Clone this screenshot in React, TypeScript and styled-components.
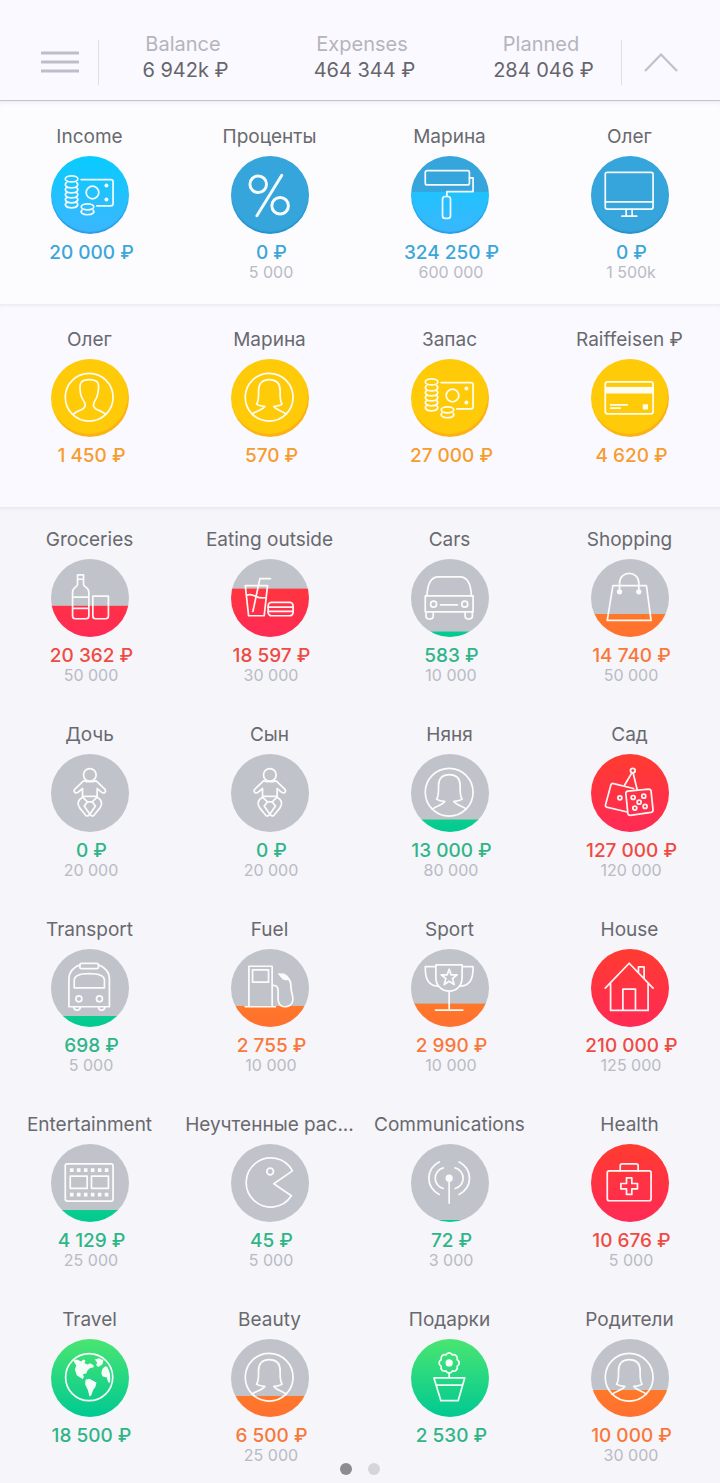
import React from 'react';
import styled, { createGlobalStyle } from 'styled-components';

const GlobalStyle = createGlobalStyle`
  *, *::before, *::after { box-sizing: border-box; }
  body {
    margin: 0;
    background: #f5f5fa;
    font-family: Inter, "Noto Sans", "Liberation Sans", sans-serif;
  }
  button {
    margin: 0;
    padding: 0;
    border: 0;
    background: none;
    font: inherit;
    color: inherit;
    cursor: pointer;
  }
`;

type Tone = 'income' | 'account' | 'green' | 'orange' | 'red';

const tones: Record<Tone, { base: string; fill: string; text: string; edge: string }> = {
  income: {
    base: '#35a5db',
    fill: 'linear-gradient(#08ccff, #3cb6fd)',
    text: '#3ba6d8',
    edge: 'inset 0 -2px 1px rgba(20, 120, 190, 0.4)',
  },
  account: {
    base: '#ffcb08',
    fill: 'linear-gradient(#ffcb08, #ffcb08)',
    text: '#f79c2d',
    edge: 'inset -1px -3px 1px #fcb116',
  },
  green: {
    base: '#c0c3c9',
    fill: 'linear-gradient(#4ae571, #00c993)',
    text: '#2fb587',
    edge: 'none',
  },
  orange: {
    base: '#c0c3c9',
    fill: 'linear-gradient(#ff8a1a, #ff7030)',
    text: '#f9783a',
    edge: 'none',
  },
  red: {
    base: '#c0c3c9',
    fill: 'linear-gradient(#ff3b30, #ff2a55)',
    text: '#f04a42',
    edge: 'none',
  },
};

const Page = styled.div`
  display: flex;
  flex-direction: column;
  min-height: 100vh;
`;

const Header = styled.header`
  display: flex;
  align-items: flex-end;
  height: 101px;
  padding: 0 21px 15px;
  background: #faf9ff;
  border-bottom: 1px solid #c5c4ce;
`;

const HeaderButton = styled.button`
  display: flex;
  align-items: center;
  justify-content: center;
  width: 77px;
  height: 45px;
`;

const Totals = styled.div`
  flex: 1;
  display: flex;
  justify-content: space-between;
  height: 45px;
  padding: 0 20px 0 24px;
  border: solid #dfdee8;
  border-width: 0 1px;
`;

const Total = styled.div`
  display: flex;
  flex-direction: column;
  align-items: center;
  justify-content: flex-end;
  width: 120px;
  margin-top: -10px;
  padding-bottom: 2px;
  white-space: nowrap;
`;

const TotalLabel = styled.span`
  font-size: 20px;
  line-height: 26px;
  color: #b5b4bd;
`;

const TotalValue = styled.span`
  padding-left: 5px;
  font-size: 20px;
  line-height: 26px;
  color: #66656b;
`;

const Section = styled.section<{ $bg: string; $top: number; $bottom: number }>`
  display: grid;
  grid-template-columns: repeat(4, minmax(0, 1fr));
  row-gap: 39px;
  padding: ${(p) => p.$top}px 0 ${(p) => p.$bottom}px;
  background: ${(p) => p.$bg};
  box-shadow: inset 0 4px 4px -3px rgba(90, 90, 120, 0.12);
`;

const Cell = styled.button`
  display: flex;
  flex-direction: column;
  align-items: center;
  height: 156px;
  padding-right: 1px;
  white-space: nowrap;
`;

const Name = styled.span`
  max-width: 100%;
  font-size: 19px;
  line-height: 26px;
  color: #69696e;
`;

const Disc = styled.span<{ $tone: Tone; $level: number }>`
  display: block;
  width: 78px;
  height: 78px;
  margin: 6px 0 8px;
  border-radius: 50%;
  background:
    linear-gradient(${(p) => tones[p.$tone].base}, ${(p) => tones[p.$tone].base}) top / 100% ${(p) => 100 - p.$level}% no-repeat,
    ${(p) => tones[p.$tone].fill};
  box-shadow: ${(p) => tones[p.$tone].edge};
`;

const Glyph = styled.svg`
  display: block;
  width: 78px;
  height: 78px;
  fill: none;
  stroke: #fff;
  stroke-width: 5.2px;
  stroke-linecap: round;
  stroke-linejoin: round;
  opacity: 0.95;

  .solid {
    fill: #fff;
    stroke: none;
  }
`;

const Amount = styled.span<{ $tone: Tone }>`
  padding-left: 4px;
  font-size: 19px;
  font-weight: 500;
  line-height: 22px;
  color: ${(p) => tones[p.$tone].text};
`;

const Limit = styled.span`
  padding-left: 3px;
  font-size: 16px;
  line-height: 16px;
  color: #b9bbc3;
`;

const Pager = styled.nav`
  display: flex;
  justify-content: center;
  align-items: flex-start;
  gap: 16px;
  flex: 1;
  min-height: 20px;
  background: #f5f5fa;
`;

const Dot = styled.button<{ $on?: boolean }>`
  width: 12px;
  height: 12px;
  border-radius: 50%;
  background: ${(p) => (p.$on ? '#8d8c92' : '#d6d6d9')};
`;

const petals = (() => {
  const n = 8;
  const pts = Array.from({ length: n }, (_, i) => {
    const a = (Math.PI * 2 * (i + 0.5)) / n;
    return `${(115 + 26 * Math.cos(a)).toFixed(1)} ${(72 + 26 * Math.sin(a)).toFixed(1)}`;
  });
  return `M${pts[n - 1]} ` + pts.map((p) => `A11 11 0 0 1 ${p}`).join(' ') + 'Z';
})();

const coins = [80, 95, 110, 125, 140]
  .map((y) => `M47 ${y}c-8 6-3 16 15 16s23-10 15-16`)
  .join('');

const icons = {
  money: (
    <>
      <ellipse cx="62" cy="69" rx="19" ry="9" />
      <path d={coins} />
      <ellipse cx="110" cy="153" rx="19" ry="9" />
      <path d="M93 163c-6 8 2 14 17 14s23-6 17-14" />
      <path d="M91 71H180q7 0 7 7V143q0 7-7 7H138" />
      <circle cx="125" cy="110" r="19" />
      <circle className="solid" cx="167" cy="89" r="6" />
      <circle className="solid" cx="167" cy="131" r="6" />
    </>
  ),
  percent: (
    <g strokeWidth="9">
      <circle cx="82" cy="85" r="25" />
      <circle cx="148" cy="150" r="25" />
      <path d="M153 58L78 180" />
    </g>
  ),
  roller: (
    <>
      <rect x="43" y="44" width="133" height="43" rx="6" />
      <path d="M176 66H187V107H108V122" />
      <rect x="95" y="122" width="24" height="66" rx="8" />
    </>
  ),
  monitor: (
    <>
      <rect x="43" y="49" width="144" height="111" rx="6" />
      <path d="M43 138H187M106 161V181M124 161V181M93 181H138" />
    </>
  ),
  man: (
    <>
      <circle cx="115" cy="115" r="72" />
      <path d="M67 166C82 152 103 155 103 139C103 126 91 122 89 104C87 90 85 80 90 72C95 63 104 62 115 62C127 62 136 63 141 72C146 80 143 90 141 104C139 122 128 126 128 139C128 155 149 152 164 166" />
    </>
  ),
  woman: (
    <>
      <circle cx="115" cy="115" r="72" />
      <path d="M64 166C76 156 97 153 102 143C94 142 84 141 77 136C84 128 83 110 83 95C83 72 97 62 115 62C134 62 148 72 148 95C148 110 147 128 154 136C147 141 137 142 129 143C134 153 155 156 167 166" />
    </>
  ),
  card: (
    <>
      <rect x="43" y="69" width="144" height="96" rx="7" />
      <path d="M59 138H109M59 148H88" />
      <rect className="solid" x="43" y="84" width="144" height="20" />
      <rect className="solid" x="156" y="136" width="16" height="16" rx="2" />
    </>
  ),
  bottle: (
    <>
      <path d="M80 48H98V76C98 86 114 84 114 100V172q0 8-8 8H73q-8 0-8-8V100C65 84 80 86 80 76ZM80 61H98M65 115H114M65 149H114" />
      <path d="M126 112H173V172q0 8-8 8H134q-8 0-8-8Z" />
    </>
  ),
  drink: (
    <>
      <path d="M43 80H110L100 171H53ZM119 59H87L66 158M48 109Q58 104 74 112T106 116" />
      <rect x="112" y="131" width="75" height="40" rx="10" />
      <path d="M112 145H187M112 158H187" />
    </>
  ),
  car: (
    <>
      <path d="M48 111C50 70 65 54 82 54H148C165 54 180 70 182 111" />
      <rect x="43" y="111" width="144" height="48" />
      <path d="M45 159V172c0 12 22 12 22 0V159M163 159V172c0 12 22 12 22 0V159M89 138H140" />
      <circle cx="68" cy="136" r="9" />
      <circle cx="162" cy="136" r="9" />
    </>
  ),
  bag: (
    <>
      <path d="M66 80H167L181 185H49ZM86 98V72C86 34 144 34 144 72V98" />
      <circle className="solid" cx="86" cy="99" r="8" />
      <circle className="solid" cx="144" cy="99" r="8" />
    </>
  ),
  baby: (
    <>
      <circle cx="117" cy="63" r="19" />
      <path d="M98 81L72 106C66 113 74 121 82 115L95 104V128H139V104L152 115C160 121 168 113 162 106L136 81Q117 86 98 81" />
      <path d="M95 130C80 138 78 152 87 163L104 184C110 190 119 184 114 177L100 157L110 144H124L134 157L120 177C115 184 124 190 130 184L147 163C156 152 154 138 139 130M95 130L110 144M139 130L124 144" />
    </>
  ),
  dice: (
    <>
      <circle cx="126" cy="50" r="7" />
      <path d="M123 57L101 94M127 58L139 107" />
      <path d="M106 174L47 160q-5-2-3-8L60 93q2-5 8-4L128 104" />
      <path d="M111 112L174 106q6 0 7 6L187 169q0 6-6 7L118 185q-6 0-7-6L105 119q0-6 6-7Z" />
      <circle cx="87" cy="132" r="6" />
      <circle cx="127" cy="131" r="6" />
      <circle cx="159" cy="127" r="6" />
      <circle cx="145" cy="145" r="6" />
      <circle cx="132" cy="163" r="6" />
      <circle cx="163" cy="158" r="6" />
    </>
  ),
  bus: (
    <>
      <path d="M87 48C68 54 54 70 54 90V174H176V90C176 70 162 54 143 48" />
      <rect x="87" y="43" width="56" height="16" rx="5" />
      <path d="M70 117V94C70 80 90 74 115 74C141 74 161 80 161 94V117Z" />
      <circle cx="84" cy="150" r="9" />
      <circle cx="146" cy="150" r="9" />
      <path d="M69 175c0 13 19 13 19 0M143 175c0 13 19 13 19 0" />
    </>
  ),
  fuel: (
    <>
      <path d="M54 173V52H124V173M43 174H134" />
      <rect x="65" y="63" width="48" height="37" />
      <path d="M124 110C140 108 143 118 142 132C141 152 140 174 163 174C185 174 189 155 185 140C180 122 180 115 180 105C180 97 176 92 170 88" />
      <path className="solid" d="M140 73L160 74Q170 78 177 90L168 95L156 92Z" />
    </>
  ),
  trophy: (
    <>
      <path d="M75 48H154V85C154 113 135 127 115 127C95 127 75 113 75 85ZM75 53H43C42 95 55 112 83 112M154 53H187C188 95 175 112 147 112M115 127V184M74 184H156" />
      <path d="M115 61L121 78L139 78L125 89L130 107L115 97L100 107L105 89L91 78L109 78Z" />
    </>
  ),
  house: (
    <path d="M43 118L115 43L187 118M59 103V185H172V103M96 185V121H134V185M143 71V54H160V89" />
  ),
  film: (
    <>
      <rect x="43" y="60" width="144" height="112" rx="6" />
      <rect x="58" y="97" width="51" height="37" />
      <rect x="122" y="97" width="51" height="37" />
      {[57, 78, 99, 120, 141, 162].map((x) => (
        <path key={x} className="solid" d={`M${x} 73h11v11h-11ZM${x} 147h11v11h-11Z`} />
      ))}
    </>
  ),
  pacman: (
    <>
      <path d="M185 81A74 74 0 1 0 182 156L129 120Z" />
      <circle cx="118" cy="83" r="10" />
    </>
  ),
  antenna: (
    <>
      <path d="M85 54A54 54 0 0 0 85 152M97 72A32 32 0 0 0 97 134M145 54A54 54 0 0 1 145 152M133 72A32 32 0 0 1 133 134M115 103V178" />
      <circle className="solid" cx="115" cy="103" r="11" />
    </>
  ),
  kit: (
    <>
      <rect x="49" y="81" width="132" height="90" rx="6" />
      <path d="M88 81V66q0-6 6-6H136q6 0 6 6V81" />
      <path d="M107 102H123V119H140V135H123V152H107V135H90V119H107Z" />
    </>
  ),
  globe: (
    <>
      <circle cx="115" cy="115" r="71" />
      <path className="solid" d="M67 65L78 62L91 68L97 62L104 65L101 73L110 77L118 73L128 79L129 85L118 87L110 95L106 104L96 106L99 114L96 121L88 116L78 110L72 92L76 80Z" />
      <path className="solid" d="M104 123L116 120L124 124L137 131L134 144L127 154L121 170L116 173L111 154L103 137Z" />
      <path className="solid" d="M132 62L145 58L158 64L155 76L143 84L136 79L139 71Z" />
      <path className="solid" d="M164 82C152 88 149 104 156 113L168 116L172 130L178 132C180 112 178 97 170 84Z" />
    </>
  ),
  flower: (
    <>
      <path d={petals} />
      <circle className="solid" cx="115" cy="72" r="11" />
      <path d="M115 102V117M69 117H162L142 186H90ZM76 139H155" />
    </>
  ),
};

type Item = {
  name: string;
  icon: keyof typeof icons;
  tone: Tone;
  level: number;
  amount: string;
  limit?: string;
};

const income: Item[] = [
  { name: 'Income', icon: 'money', tone: 'income', level: 100, amount: '20 000 ₽' },
  { name: 'Проценты', icon: 'percent', tone: 'income', level: 0, amount: '0 ₽', limit: '5 000' },
  { name: 'Марина', icon: 'roller', tone: 'income', level: 54, amount: '324 250 ₽', limit: '600 000' },
  { name: 'Олег', icon: 'monitor', tone: 'income', level: 0, amount: '0 ₽', limit: '1 500k' },
];

const accounts: Item[] = [
  { name: 'Олег', icon: 'man', tone: 'account', level: 100, amount: '1 450 ₽' },
  { name: 'Марина', icon: 'woman', tone: 'account', level: 100, amount: '570 ₽' },
  { name: 'Запас', icon: 'money', tone: 'account', level: 100, amount: '27 000 ₽' },
  { name: 'Raiffeisen ₽', icon: 'card', tone: 'account', level: 100, amount: '4 620 ₽' },
];

const expenses: Item[] = [
  { name: 'Groceries', icon: 'bottle', tone: 'red', level: 40, amount: '20 362 ₽', limit: '50 000' },
  { name: 'Eating outside', icon: 'drink', tone: 'red', level: 62, amount: '18 597 ₽', limit: '30 000' },
  { name: 'Cars', icon: 'car', tone: 'green', level: 7, amount: '583 ₽', limit: '10 000' },
  { name: 'Shopping', icon: 'bag', tone: 'orange', level: 29, amount: '14 740 ₽', limit: '50 000' },
  { name: 'Дочь', icon: 'baby', tone: 'green', level: 0, amount: '0 ₽', limit: '20 000' },
  { name: 'Сын', icon: 'baby', tone: 'green', level: 0, amount: '0 ₽', limit: '20 000' },
  { name: 'Няня', icon: 'woman', tone: 'green', level: 16, amount: '13 000 ₽', limit: '80 000' },
  { name: 'Сад', icon: 'dice', tone: 'red', level: 100, amount: '127 000 ₽', limit: '120 000' },
  { name: 'Transport', icon: 'bus', tone: 'green', level: 14, amount: '698 ₽', limit: '5 000' },
  { name: 'Fuel', icon: 'fuel', tone: 'orange', level: 27, amount: '2 755 ₽', limit: '10 000' },
  { name: 'Sport', icon: 'trophy', tone: 'orange', level: 30, amount: '2 990 ₽', limit: '10 000' },
  { name: 'House', icon: 'house', tone: 'red', level: 100, amount: '210 000 ₽', limit: '125 000' },
  { name: 'Entertainment', icon: 'film', tone: 'green', level: 15, amount: '4 129 ₽', limit: '25 000' },
  { name: 'Неучтенные рас...', icon: 'pacman', tone: 'green', level: 0, amount: '45 ₽', limit: '5 000' },
  { name: 'Communications', icon: 'antenna', tone: 'green', level: 2, amount: '72 ₽', limit: '3 000' },
  { name: 'Health', icon: 'kit', tone: 'red', level: 100, amount: '10 676 ₽', limit: '5 000' },
  { name: 'Travel', icon: 'globe', tone: 'green', level: 100, amount: '18 500 ₽' },
  { name: 'Beauty', icon: 'woman', tone: 'orange', level: 27, amount: '6 500 ₽', limit: '25 000' },
  { name: 'Подарки', icon: 'flower', tone: 'green', level: 100, amount: '2 530 ₽' },
  { name: 'Родители', icon: 'woman', tone: 'orange', level: 34, amount: '10 000 ₽', limit: '30 000' },
];

const totals = [
  ['Balance', '6 942k ₽'],
  ['Expenses', '464 344 ₽'],
  ['Planned', '284 046 ₽'],
];

function Tile({ item }: { item: Item }) {
  return (
    <Cell type="button">
      <Name>{item.name}</Name>
      <Disc $tone={item.tone} $level={item.level}>
        <Glyph viewBox="0 0 235 235" aria-hidden="true">
          {icons[item.icon]}
        </Glyph>
      </Disc>
      <Amount $tone={item.tone}>{item.amount}</Amount>
      {item.limit && <Limit>{item.limit}</Limit>}
    </Cell>
  );
}

function Tiles({ items }: { items: Item[] }) {
  return (
    <>
      {items.map((item, i) => (
        <Tile key={i} item={item} />
      ))}
    </>
  );
}

export default function App() {
  return (
    <>
      <GlobalStyle />
      <Page>
        <Header>
          <HeaderButton type="button" aria-label="Menu">
            <svg width="38" height="23" viewBox="0 0 38 23" stroke="#bfbdca" strokeWidth="3">
              <path d="M0 2H38M0 11H38M0 20H38" />
            </svg>
          </HeaderButton>
          <Totals>
            {totals.map(([label, value]) => (
              <Total key={label}>
                <TotalLabel>{label}</TotalLabel>
                <TotalValue>{value}</TotalValue>
              </Total>
            ))}
          </Totals>
          <HeaderButton type="button" aria-label="Collapse">
            <svg width="34" height="20" viewBox="0 0 34 20" fill="none" stroke="#c2c0cc" strokeWidth="2.2">
              <path d="M1 18L17 1.500L33 18" />
            </svg>
          </HeaderButton>
        </Header>
        <main>
          <Section $bg="#fcfcfe" $top={23} $bottom={24}>
            <Tiles items={income} />
          </Section>
          <Section $bg="#faf9ff" $top={23} $bottom={24}>
            <Tiles items={accounts} />
          </Section>
          <Section $bg="#f5f5fa" $top={20} $bottom={0}>
            <Tiles items={expenses} />
          </Section>
        </main>
        <Pager aria-label="Pages">
          <Dot type="button" aria-label="Page 1" $on />
          <Dot type="button" aria-label="Page 2" />
        </Pager>
      </Page>
    </>
  );
}
